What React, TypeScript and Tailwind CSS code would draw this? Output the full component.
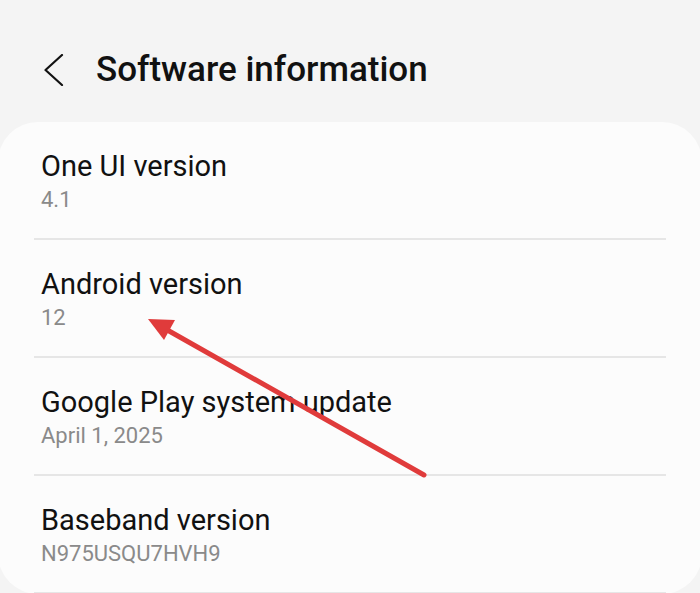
const items = [
  { title: "One UI version", value: "4.1" },
  { title: "Android version", value: "12" },
  { title: "Google Play system update", value: "April 1, 2025" },
  { title: "Baseband version", value: "N975USQU7HVH9" },
];

export default function App() {
  return (
    <div
      className="relative h-[593px] w-[700px] overflow-hidden bg-[#f4f4f4]"
      style={{ fontFamily: "Roboto, 'Noto Sans', sans-serif" }}
    >
      <header className="flex h-[122px] items-center pt-[18px]">
        <button className="ml-[44px] flex h-[32px] w-[20px] items-center">
          <svg width="20" height="32" viewBox="0 0 20 32" fill="none">
            <path d="M18 1 L1.5 16 L18 31" stroke="#111" strokeWidth="2.2" strokeLinecap="round" strokeLinejoin="round" />
          </svg>
        </button>
        <h1 className="ml-[32px] text-[35px] font-medium text-[#111]">Software information</h1>
      </header>

      <div className="mx-[-2px] rounded-[40px] bg-[#fcfcfc]">
        {items.map((item) => (
          <div key={item.title}>
            <div className="px-[43px] pt-[26px] pb-[24px]">
              <div className="text-[29px] leading-[36px] text-[#111]">{item.title}</div>
              <div className="mt-[2px] text-[22px] leading-[28px] text-[#8a8a8a]">{item.value}</div>
            </div>
            <div className="mx-[36px] h-[2px] bg-[#e6e6e6]" />
          </div>
        ))}
      </div>

      <svg className="pointer-events-none absolute left-0 top-0" width="700" height="593">
        <line x1="424" y1="475" x2="162" y2="327" stroke="#e03b3b" strokeWidth="5" strokeLinecap="round" />
        <polygon points="148,319 175,320 164,340" fill="#e03b3b" />
      </svg>
    </div>
  );
}
